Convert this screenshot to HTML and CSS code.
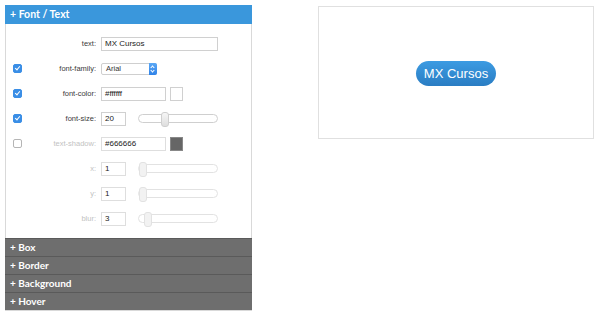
FILE: index.html
```html
<!DOCTYPE html>
<html lang="en">
<head>
  <meta charset="UTF-8" />
  <title>CSS Button Generator</title>
  <link rel="stylesheet" href="styles.css">
</head>
<body>
  <div class="page">
    <aside class="editor">
      <div class="section-head active">+ Font / Text</div>
      <div class="section-body">
        <div class="row">
          <div class="check"></div>
          <label class="name">text:</label>
          <div class="field text-field">MX Cursos</div>
        </div>
        <div class="row">
          <div class="check"><span class="box on"></span></div>
          <label class="name">font-family:</label>
          <div class="select">Arial<span class="stepper"></span></div>
        </div>
        <div class="row">
          <div class="check"><span class="box on"></span></div>
          <label class="name">font-color:</label>
          <div class="field color-field">#ffffff</div>
          <span class="swatch"></span>
        </div>
        <div class="row">
          <div class="check"><span class="box on"></span></div>
          <label class="name">font-size:</label>
          <div class="field num-field">20</div>
          <div class="slider"><span class="thumb" style="left:22px"></span></div>
        </div>
        <div class="row off">
          <div class="check"><span class="box"></span></div>
          <label class="name">text-shadow:</label>
          <div class="field color-field">#666666</div>
          <span class="swatch dark"></span>
        </div>
        <div class="row off">
          <div class="check"></div>
          <label class="name">x:</label>
          <div class="field num-field">1</div>
          <div class="slider"><span class="thumb" style="left:0"></span></div>
        </div>
        <div class="row off">
          <div class="check"></div>
          <label class="name">y:</label>
          <div class="field num-field">1</div>
          <div class="slider"><span class="thumb" style="left:0"></span></div>
        </div>
        <div class="row off">
          <div class="check"></div>
          <label class="name">blur:</label>
          <div class="field num-field">3</div>
          <div class="slider"><span class="thumb" style="left:5px"></span></div>
        </div>
      </div>
      <div class="section-head">+ Box</div>
      <div class="section-head">+ Border</div>
      <div class="section-head">+ Background</div>
      <div class="section-head">+ Hover</div>
    </aside>

    <section class="preview">
      <a href="#" class="demo-btn">MX Cursos</a>
    </section>
  </div>
</body>
</html>
```

FILE: styles.css
```css
:root {
  --blue: #3a97dc;
  --gray: #6e6e6e;
  --line: #d9d9d9;
  --text: #333;
  --muted: #c2c2c2;
}

body {
  margin: 0;
  background: #fff;
  font-family: 'Liberation Sans', Arial, sans-serif;
  color: var(--text);
}

.page {
  display: flex;
  align-items: flex-start;
  padding: 5px 0 0 5px;
}

.editor {
  width: 247px;
  border: 1px solid var(--line);
  border-top: 0;
  box-sizing: border-box;
}

.section-head {
  height: 17px;
  line-height: 17px;
  padding-left: 5px;
  background: var(--gray);
  color: #fff;
  font-family: Lato, 'Open Sans', sans-serif;
  font-weight: bold;
  font-size: 10px;
  border-top: 1px solid #5a5a5a;
  margin: 0 -1px;
}

.section-head.active {
  background: var(--blue);
  border-top: 0;
  height: 19px;
  line-height: 19px;
  font-size: 10.5px;
}

.section-body {
  padding: 7px 0 7px;
}

.row {
  display: flex;
  align-items: center;
  height: 25px;
}

.check {
  width: 22px;
  padding-left: 7px;
  box-sizing: border-box;
  display: flex;
}

.box {
  width: 7px;
  height: 7px;
  border: 1px solid #b5b5b5;
  border-radius: 2px;
  background: #fff;
  position: relative;
}

.box.on {
  background: #3a8ee6;
  border-color: #3a8ee6;
}

.box.on::after {
  content: "";
  position: absolute;
  left: 2px;
  top: 0;
  width: 2px;
  height: 4px;
  border: solid #fff;
  border-width: 0 1px 1px 0;
  transform: rotate(40deg);
}

.name {
  width: 68px;
  margin-right: 5px;
  text-align: right;
  font-size: 7.5px;
  color: #3a3a3a;
}

.off .name {
  color: var(--muted);
}

.field {
  height: 14px;
  border: 1px solid #d0d0d0;
  box-sizing: border-box;
  font-size: 8px;
  line-height: 12px;
  padding-left: 3px;
  color: #222;
}

.off .field {
  border-color: #dedede;
}

.text-field { width: 117px; }
.color-field { width: 65px; }
.num-field { width: 25px; }

.select {
  width: 56px;
  height: 12px;
  border: 1px solid #cfcfcf;
  border-radius: 2px;
  box-sizing: border-box;
  font-size: 7.5px;
  line-height: 10px;
  padding-left: 4px;
  position: relative;
  background: #fff;
}

.stepper {
  position: absolute;
  right: -1px;
  top: -1px;
  width: 8px;
  height: 12px;
  border-radius: 0 2px 2px 0;
  background: linear-gradient(#5aa8f5, #2f82e8);
}

.stepper::before,
.stepper::after {
  content: "";
  position: absolute;
  left: 2px;
  width: 2px;
  height: 2px;
  border: solid #fff;
  border-width: 1px 0 0 1px;
}

.stepper::before { top: 3px; transform: rotate(45deg); }
.stepper::after { top: 6px; transform: rotate(225deg); }

.swatch {
  width: 13px;
  height: 14px;
  margin-left: 4px;
  border: 1px solid #d0d0d0;
  box-sizing: border-box;
  background: #fff;
}

.swatch.dark {
  background: #666;
  border-color: #888;
}

.slider {
  width: 80px;
  height: 9px;
  margin-left: 12px;
  border: 1px solid #cfcfcf;
  border-radius: 5px;
  box-sizing: border-box;
  position: relative;
  background: #fff;
}

.thumb {
  position: absolute;
  top: -3px;
  width: 6px;
  height: 13px;
  border: 1px solid #cfcfcf;
  border-radius: 3px;
  background: linear-gradient(#f6f6f6, #dedede);
}

.off .slider,
.off .thumb {
  border-color: #e2e2e2;
}

.off .thumb {
  background: #f2f2f2;
}

.preview {
  width: 276px;
  height: 133px;
  margin: 1px 0 0 66px;
  border: 1px solid #e0e0e0;
  box-sizing: border-box;
  display: flex;
  align-items: center;
  justify-content: center;
}

.demo-btn {
  display: inline-block;
  height: 25px;
  line-height: 25px;
  padding: 0 8px;
  border-radius: 13px;
  background: linear-gradient(#3c9be2, #2a7dc3);
  color: #fff;
  font-size: 13px;
  text-decoration: none;
  box-sizing: border-box;
  margin-top: 1px;
}
```
